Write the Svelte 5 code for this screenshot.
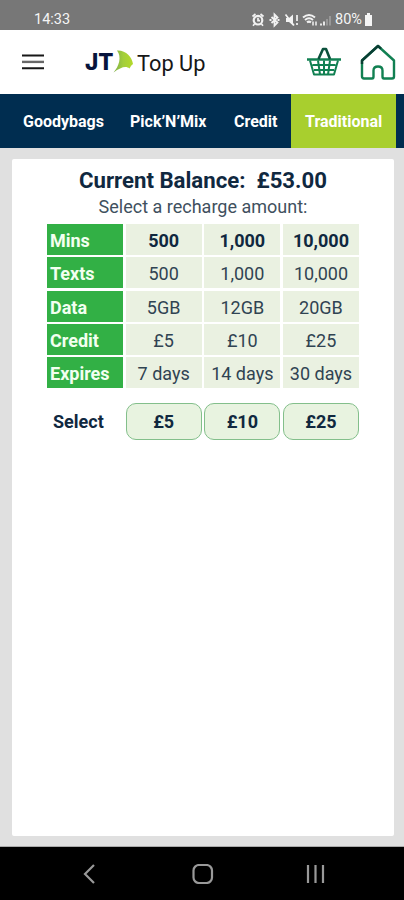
<script>
  const tabs = [
    { label: 'Goodybags', width: 118 },
    { label: "Pick’N’Mix", width: 103 },
    { label: 'Credit', width: 70 },
    { label: 'Traditional', width: 105, active: true }
  ];
  const rows = [
    ['Mins', '500', '1,000', '10,000'],
    ['Texts', '500', '1,000', '10,000'],
    ['Data', '5GB', '12GB', '20GB'],
    ['Credit', '£5', '£10', '£25'],
    ['Expires', '7 days', '14 days', '30 days']
  ];
  const amounts = ['£5', '£10', '£25'];
</script>

<div class="screen">
  <div class="status">
    <span class="time">14:33</span>
    <svg class="indicators" width="81" height="16" viewBox="0 0 81 16" fill="none" stroke="#f2f2f2">
      <circle cx="7" cy="8.2" r="4.3" stroke-width="2.2" />
      <path d="M7 5.8v2.8h2M1.5 4.5l3-2.5M12.5 4.5l-3-2.5M3.5 12l-1.5 1.8M10.5 12l1.5 1.8" stroke-width="1.7" />
      <path d="M20.5 5l6 5.6-3 3V2.5l3 3-6 5.5M18.500 8h2M26.500 8h2" stroke-width="1.8" />
      <path d="M35 6h3l4-3.500v11L38 10h-3z" fill="#f2f2f2" stroke="none" />
      <path d="M34.500 2.500l8.500 11M46 3v6M46 11v2" stroke-width="1.700" />
      <path d="M52 5.500q6-5 12 0M54 8q4-3.500 8 0M56 10.400q2-1.600 4 0" stroke-width="2" />
      <path d="M62 9.500v4M65 9.500v4" stroke-width="1.500" />
      <path d="M70 13.500v-2M73 13.500V9.500" stroke-width="1.800" />
      <path d="M76 13.500V7M79 13.500V4" stroke="#a4a4a4" stroke-width="1.500" />
    </svg>
    <span class="percent">80%</span>
    <svg class="battery" width="9" height="13" viewBox="0 0 9 13"><path d="M1 2h2V0h3v2h2v11H1z" fill="#f5f5f5" /></svg>
  </div>

  <header>
    <svg class="menu" width="22" height="16" viewBox="0 0 22 16" fill="none" stroke-width="2">
      <path d="M0 1.500h22M0 14.200h22" stroke="#171717" />
      <path d="M0 7.900h22" stroke="#686868" stroke-width="2.400" />
    </svg>
    <div class="brand">
      <b>JT</b>
      <svg width="20" height="24" viewBox="0 0 20 24">
        <defs>
          <linearGradient id="sail" x1="0" y1="0" x2="1" y2="0">
            <stop offset="0" stop-color="#7fae4a" />
            <stop offset=".5" stop-color="#a3cf3a" />
            <stop offset="1" stop-color="#b4d92a" />
          </linearGradient>
        </defs>
        <path d="M4 0.500C13 0 19 7 20 14Q18 15 16.500 18.500C13 15.500 8 17 .5 22.500C6 16.500 9 7 4 .5Z" fill="url(#sail)" />
      </svg>
      <span>Top Up</span>
    </div>
    <svg class="basket" width="36" height="32" viewBox="0 0 36 32" fill="none" stroke="#118052" stroke-width="2" stroke-linejoin="round">
      <path d="M1 13.500h34" stroke-width="2.400" />
      <path d="M4 14.500l4 14h20l4-14M6.500 19h23M8 24h20M12 14.500l2 14M18 14.500v14M24 14.500l-2 14" />
      <path d="M12.500 13L17 3h3l4 10" stroke="#0b513c" stroke-width="2.600" />
    </svg>
    <svg class="home" width="36" height="38" viewBox="0 0 36 38" fill="none" stroke="#118052" stroke-width="2.400" stroke-linejoin="round">
      <path d="M18 3L34 17.500v16q0 2-2 2h-8q-1.500 0-1.500-2v-6q0-4-4.500-4t-4.500 4v6q0 2-1.500 2H4q-2 0-2-2v-16Z" />
      <path d="M2 21v-3.500L18 3l3 2.700" stroke="#093e33" />
    </svg>
  </header>

  <nav>
    {#each tabs as tab}
      <span class="tab" class:active={tab.active} style="width: {tab.width}px">{tab.label}</span>
    {/each}
  </nav>

  <main>
    <section>
      <h1>Current Balance: &nbsp;£53.00</h1>
      <p>Select a recharge amount:</p>
      <div class="plans">
        {#each rows as row, r}
          {#each row as cell, c}
            <div class="cell" class:label={c === 0} class:strong={r === 0}>{cell}</div>
          {/each}
        {/each}
      </div>
      <div class="choices">
        <span class="select">Select</span>
        {#each amounts as amount}
          <button>{amount}</button>
        {/each}
      </div>
    </section>
  </main>

  <footer>
    <svg width="12" height="20" viewBox="0 0 12 20"><path d="M11 1L2 10l9 9" /></svg>
    <svg class="circle" width="22" height="20" viewBox="0 0 22 20"><rect x="1.500" y="1" width="18.500" height="18" rx="5.500" /></svg>
    <svg width="20" height="20" viewBox="0 0 20 20"><path d="M2 1v18M9.500 1v18M17 1v18" /></svg>
  </footer>
</div>

<style>
  :global(body) { margin: 0; }
  * { box-sizing: border-box; }
  .screen {
    width: 404px;
    height: 900px;
    display: flex;
    flex-direction: column;
    overflow: hidden;
    font-family: Roboto, sans-serif;
    color: #10283f;
    background: #fff;
  }
  svg { display: block; flex: none; }
  .status {
    height: 30px;
    flex: none;
    display: flex;
    align-items: center;
    padding: 9px 0 0 34px;
    background: #777;
    color: #f5f5f5;
    font-size: 14.500px;
    line-height: 20px;
  }
  .time { width: 217px; }
  .percent { margin-left: 3px; width: 29px; white-space: nowrap; }
  header {
    height: 64px;
    flex: none;
    display: flex;
    align-items: center;
    padding-left: 22px;
  }
  .brand { display: flex; align-items: center; margin-left: 41px; width: 221px; height: 30px; }
  .brand b { width: 28px; font: 800 22.500px/26px Inter, sans-serif; color: #07143c; }
  .brand svg { margin-top: -1px; }
  .brand span { margin: 3px 0 0 4px; font-size: 21.800px; line-height: 26px; color: #171717; white-space: nowrap; }
  .home { margin-left: 18px; }
  nav { height: 54px; flex: none; display: flex; background: #002d50; }
  .tab {
    display: flex;
    align-items: center;
    padding-left: 12px;
    color: #fff;
    font-weight: 700;
    font-size: 16px;
    white-space: nowrap;
  }
  .tab:first-child { padding-left: 23px; }
  .tab.active { padding-left: 14px; background: #a8cf2e; }
  .tab:nth-child(3) { padding-left: 13px; }
  main { height: 699px; flex: none; padding: 11px 10px 11px 12px; background: #e0e0e0; border-bottom: 1px solid #aaa; }
  section { height: 677px; background: #fff; border-radius: 2px; display: flex; flex-direction: column; align-items: center; }
  h1 { margin: 8px 0 0; font-size: 22.200px; line-height: 26px; font-weight: 700; white-space: pre; }
  p { margin: 2px 0 0; font-size: 18px; line-height: 24px; color: #40505e; }
  .plans {
    width: 312px;
    margin-top: 5px;
    display: grid;
    grid-template-columns: repeat(4, 76px);
    grid-auto-rows: 31px;
    gap: 2.300px 2.670px;
  }
  .cell {
    background: #eaf1e1;
    color: #304352;
    font-size: 18px;
    line-height: 33px;
    text-align: center;
    white-space: nowrap;
  }
  .cell.strong { font-weight: 700; color: #10283f; }
  .cell.label { background: #32b045; color: #f2fff0; font-weight: 700; text-align: left; padding-left: 3px; }
  .choices { width: 312px; margin-top: 15px; display: grid; grid-template-columns: repeat(4, 76px); gap: 2.670px; height: 36px; }
  .select { padding-left: 6px; font-size: 18px; line-height: 37px; font-weight: 700; }
  button {
    margin: 0;
    padding: 0;
    border: 1.500px solid #83bf8b;
    border-radius: 10px;
    background: #e8f3e0;
    color: #10283f;
    font: 700 18px/34px Roboto, sans-serif;
  }
  footer { height: 53px; flex: none; display: flex; align-items: center; padding-left: 83px; background: #000; }
  footer svg { fill: none; stroke: #999; stroke-width: 2.200; }
  footer .circle { margin: 0 92px 0 97px; }
</style>
